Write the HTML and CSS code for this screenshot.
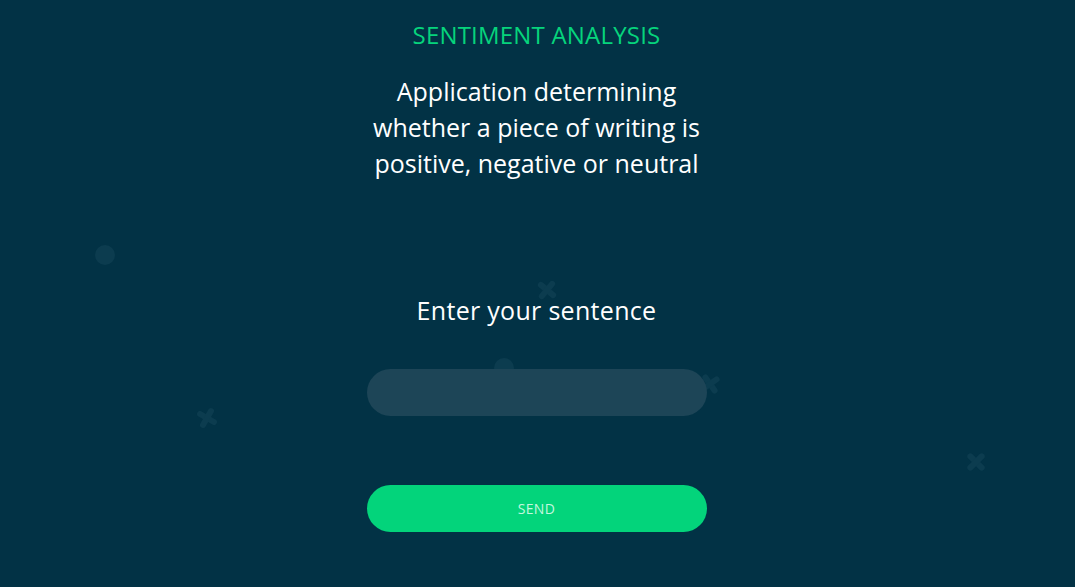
FILE: index.html
```html
<!DOCTYPE html>
<html lang="en">
<head>
<meta charset="utf-8">
<title>Sentiment Analysis</title>
<link rel="stylesheet" href="styles.css">
</head>
<body>
<div class="page">
  <div class="decor">
    <span class="dot dot-a"></span>
    <span class="dot dot-b"></span>
    <span class="cross cross-a"></span>
    <span class="cross cross-b"></span>
    <span class="cross cross-c"></span>
    <span class="cross cross-d"></span>
  </div>
  <main class="column">
    <h1 class="title">SENTIMENT ANALYSIS</h1>
    <p class="subtitle">Application determining whether a piece of writing is positive, negative or neutral</p>
    <label class="prompt" for="sentence">Enter your sentence</label>
    <input class="field" id="sentence" type="text">
    <button class="send" type="button">SEND</button>
  </main>
</div>
</body>
</html>
```

FILE: styles.css
```css
* { box-sizing: border-box; }
html, body {
  margin: 0;
  padding: 0;
  height: 100%;
  background: #023245;
  overflow: hidden;
}
body {
  font-family: "Open Sans", "DejaVu Sans", sans-serif;
  color: #ffffff;
}
.page {
  position: relative;
  width: 100%;
  height: 100%;
}
.decor span {
  position: absolute;
  display: block;
  z-index: 0;
}
.dot {
  width: 20px;
  height: 20px;
  border-radius: 50%;
  background: #0c3c4f;
}
.dot-a { left: 95px; top: 245px; }
.dot-b { left: 494px; top: 358px; }
.cross {
  width: 22px;
  height: 22px;
}
.cross::before, .cross::after {
  content: "";
  position: absolute;
  left: 0;
  top: 8px;
  width: 22px;
  height: 6px;
  border-radius: 3px;
  background: #0c3c4f;
}
.cross::before { transform: rotate(45deg); }
.cross::after { transform: rotate(-45deg); }
.cross-a { left: 196px; top: 407px; transform: rotate(-15deg); }
.cross-b { left: 536px; top: 279px; transform: rotate(-5deg); }
.cross-c { left: 699px; top: 373px; transform: rotate(10deg); }
.cross-d { left: 965px; top: 451px; }

.column {
  position: relative;
  z-index: 1;
  width: 340px;
  margin: 0 auto;
  padding-top: 20px;
  display: flex;
  flex-direction: column;
  align-items: stretch;
  text-align: center;
  transform: translateX(-1px);
}
.title {
  margin: 0;
  font-size: 24px;
  line-height: 30px;
  font-weight: 500;
  color: #06d47c;
  letter-spacing: 0.2px;
}
.subtitle {
  margin: 23px -4px 0;
  font-size: 25px;
  line-height: 36px;
  font-weight: 400;
}
.prompt {
  margin-top: 111px;
  font-size: 25px;
  line-height: 36px;
  letter-spacing: 0.3px;
}
.field {
  margin-top: 41px;
  height: 47px;
  border: none;
  border-radius: 24px;
  background: #1d4557;
  outline: none;
  padding: 0 24px;
  color: #fff;
  font: inherit;
}
.send {
  margin-top: 69px;
  height: 47px;
  border: none;
  border-radius: 24px;
  background: #03d47b;
  color: #c4f7df;
  font-family: inherit;
  font-size: 14px;
  letter-spacing: 0.3px;
}
```
